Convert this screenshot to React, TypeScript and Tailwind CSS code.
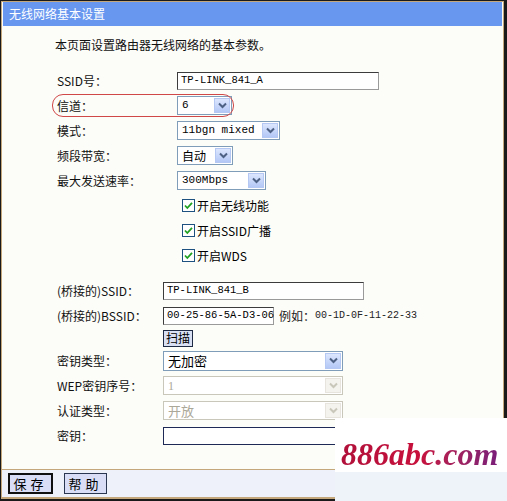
import React from 'react';

const cjk = "font-['SimSun','Noto_Sans_CJK_SC',sans-serif]";
const mono = "font-['Liberation_Mono','Noto_Sans_CJK_SC',monospace]";

function Arrow({ disabled }: { disabled?: boolean }) {
  return (
    <span
      className={
        disabled
          ? 'flex h-full w-[16px] items-center justify-center border border-[#e6e4dc] bg-[#f4f3ee]'
          : 'flex h-full w-[16px] items-center justify-center border border-[#b5c8f3] bg-gradient-to-b from-[#dce6fd] to-[#b4c8f6]'
      }
    >
      <svg width="9" height="7" viewBox="0 0 9 7">
        <path d="M1 1.5 L4.5 5 L8 1.5" fill="none" stroke={disabled ? '#c9c7ba' : '#4d6185'} strokeWidth="2" />
      </svg>
    </span>
  );
}

function Select({ value, width, disabled, cls }: { value: string; width: string; disabled?: boolean; cls?: string }) {
  return (
    <div
      className={
        'flex h-[19px] items-stretch border bg-white p-[1px] ' +
        width +
        (disabled ? ' border-[#c9c7ba] text-[#aca899]' : ' border-[#7f9db9] text-black')
      }
    >
      <span className={'flex flex-1 items-center whitespace-nowrap pl-[3px] leading-none ' + (cls ?? mono + ' text-[11px]')}>
        {value}
      </span>
      <Arrow disabled={disabled} />
    </div>
  );
}

function TextBox({ value, width }: { value?: string; width: string }) {
  return (
    <div
      className={
        'flex h-[18px] items-center whitespace-nowrap border border-[#3c3c3c] border-b-[#9a9a9a] border-r-[#9a9a9a] bg-white pl-[3px] text-[10.5px] leading-none text-black ' +
        mono +
        ' ' +
        width
      }
    >
      {value}
    </div>
  );
}

function Check({ label }: { label: string }) {
  return (
    <div className="flex h-[25px] items-center pl-[5px]">
      <svg width="13" height="13" viewBox="0 0 13 13" className="mr-[2px]">
        <rect x="0.5" y="0.5" width="12" height="12" fill="#fff" stroke="#1c5180" />
        <path d="M3 6.5 L5.3 9 L10 3.8" fill="none" stroke="#21a121" strokeWidth="1.8" />
      </svg>
      <span className="text-[12px] text-black">{label}</span>
    </div>
  );
}

function Row({ label, col, children, h }: { label: string; col: string; children: React.ReactNode; h?: string }) {
  return (
    <div className={'flex items-center ' + (h ?? 'h-[25px]')}>
      <span className={'text-[12px] text-[#111] ' + col}>{label}</span>
      {children}
    </div>
  );
}

export default function App() {
  const c1 = 'w-[120px]';
  const c2 = 'w-[106px]';
  return (
    <div className={'relative h-[501px] w-[507px] overflow-hidden bg-[#1a1a1a] ' + cjk}>
      <div className="ml-[1px] mt-[1px] flex h-[498px] w-[503px] flex-col border border-[#c4a87c] bg-[#fcfcf8]">
        <div className="mx-[1px] flex h-[24px] items-center bg-[#6897f0] pl-[6px] text-[12px] text-white">
          无线网络基本设置
        </div>
        <div className="flex flex-1 flex-col pl-[53px]">
          <div className="mt-[11px] h-[16px] text-[12px] leading-[16px] text-[#111]">本页面设置路由器无线网络的基本参数。</div>
          <div className="mt-[15px] pl-[2px]">
            <Row label="SSID号：" col={c1}>
              <TextBox value="TP-LINK_841_A" width="w-[202px]" />
            </Row>
            <div className="relative">
              <div className="absolute left-[-5px] top-[1px] h-[23px] w-[182px] rounded-[11px] border border-[#d04848]" />
              <Row label="信道：" col={c1}>
                <Select value="6" width="w-[55px]" />
              </Row>
            </div>
            <Row label="模式：" col={c1}>
              <Select value="11bgn mixed" width="w-[103px]" />
            </Row>
            <Row label="频段带宽：" col={c1}>
              <Select value="自动" width="w-[56px]" cls={cjk + ' text-[12px]'} />
            </Row>
            <Row label="最大发送速率：" col={c1}>
              <Select value="300Mbps" width="w-[89px]" />
            </Row>
            <div className="ml-[120px]">
              <Check label="开启无线功能" />
              <Check label="开启SSID广播" />
              <Check label="开启WDS" />
            </div>
            <div className="mt-[10px]">
              <Row label="(桥接的)SSID：" col={c2}>
                <TextBox value="TP-LINK_841_B" width="w-[201px]" />
              </Row>
              <Row label="(桥接的)BSSID：" col={c2}>
                <TextBox value="00-25-86-5A-D3-06" width="w-[111px]" />
                <span className="ml-[5px] text-[12px] text-[#222]">例如：</span>
                <span className={'whitespace-nowrap text-[10px] text-[#222] ' + mono}>00-1D-0F-11-22-33</span>
              </Row>
              <div className="flex h-[20px] items-center pl-[106px]">
                <button
                  type="button"
                  className="h-[17px] border border-[#1e2a44] bg-[#d9e0f4] px-[2px] text-[12px] leading-none text-black"
                >
                  扫描
                </button>
              </div>
              <Row label="密钥类型：" col={c2}>
                <Select value="无加密" width="w-[180px] h-[20px]" cls={cjk + ' text-[13px]'} />
              </Row>
              <Row label="WEP密钥序号：" col={c2}>
                <Select value="1" width="w-[180px]" disabled cls="font-['Liberation_Serif',serif] text-[12px]" />
              </Row>
              <Row label="认证类型：" col={c2}>
                <Select value="开放" width="w-[180px]" disabled cls={cjk + ' text-[13px]'} />
              </Row>
              <Row label="密钥：" col={c2}>
                <div className="h-[18px] w-[180px] border border-[#1e2a55] bg-white" />
              </Row>
            </div>
          </div>
        </div>
        <div className="flex h-[29px] items-center gap-[11px] border-y border-[#c4a87c] bg-[#eef1f9] pl-[6px]">
          <button
            type="button"
            className="h-[21px] w-[45px] border-2 border-[#101010] bg-[#d9def6] text-[13px] leading-none tracking-[4px] text-black"
          >
            保存
          </button>
          <button
            type="button"
            className="h-[21px] w-[43px] border border-[#2a3550] bg-[#d9def6] text-[13px] leading-none tracking-[4px] text-black"
          >
            帮助
          </button>
        </div>
      </div>
      <div className="absolute bottom-0 right-0 flex h-[83px] w-[172px] flex-col">
        <div className="flex h-[54px] items-end bg-white pl-[6px]">
          <span className="bg-gradient-to-r from-[#b0103a] via-[#c8103c] to-[#7a1c78] bg-clip-text pb-[2px] font-['Liberation_Serif',serif] text-[32px] font-bold italic leading-none text-transparent">
            886abc.com
          </span>
        </div>
        <div className="flex-1 bg-[#eef2f9]" />
      </div>
    </div>
  );
}
